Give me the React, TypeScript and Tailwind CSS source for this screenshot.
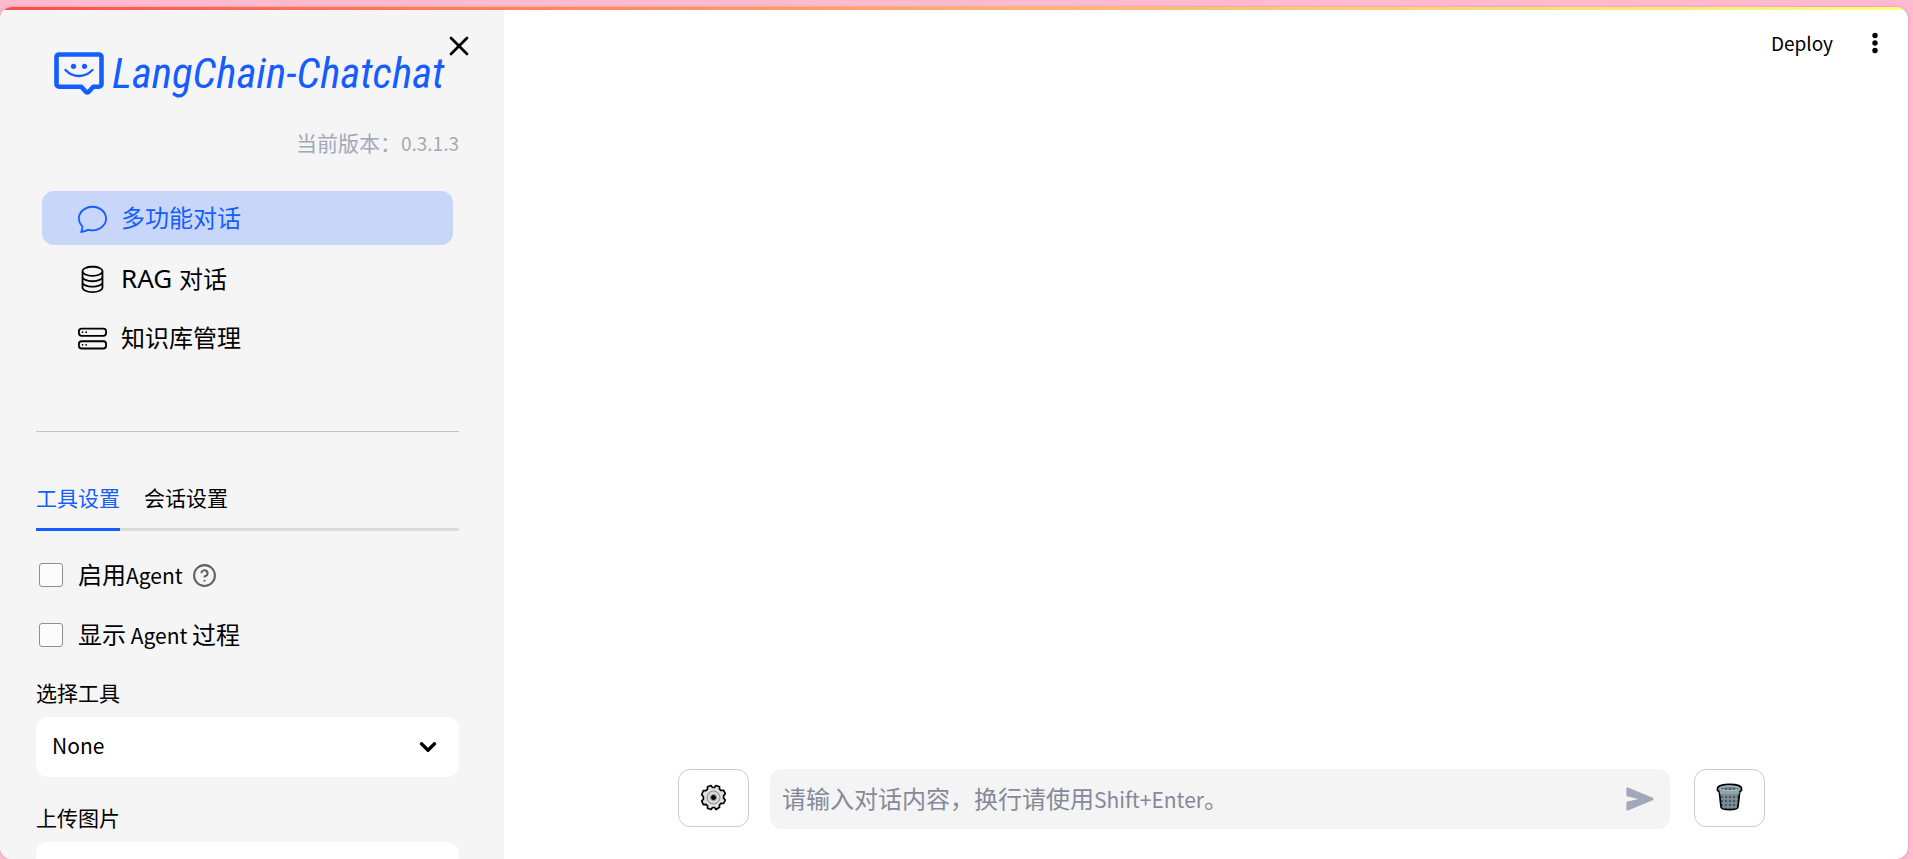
import { useState, type ReactNode } from "react";
import { BsChat, BsDatabase, BsHddStack } from "react-icons/bs";
import { ChevronDown, CircleHelp, X } from "lucide-react";

const NAV_ITEMS = [
  { id: "chat", label: "多功能对话", icon: BsChat },
  { id: "rag", prefix: "RAG ", label: "对话", icon: BsDatabase },
  { id: "kb", label: "知识库管理", icon: BsHddStack },
];

const TABS = ["工具设置", "会话设置"];

function Logo() {
  return (
    <div className="flex h-[43px] items-start gap-2 pl-[18px] text-[#165dff]">
      <svg width="50" height="43" viewBox="0 0 50 43" fill="none" stroke="currentColor" strokeLinecap="round" strokeLinejoin="round" className="shrink-0">
        <path d="M5 2.500h40a2.500 2.500 0 0 1 2.500 2.500v27.200a2.500 2.500 0 0 1-2.500 2.500h-5.500l-5 5.300q-1.200.8-2.400 0l-5-5.300H5a2.500 2.500 0 0 1-2.500-2.500V5A2.500 2.500 0 0 1 5 2.500z" strokeWidth="4.600" />
        <path d="M11.500 18c7.500 8 19 8 27 0" strokeWidth="2.400" />
        <circle cx="19.500" cy="14.300" r="2.600" fill="currentColor" stroke="none" />
        <circle cx="30.500" cy="14.300" r="2.600" fill="currentColor" stroke="none" />
      </svg>
      <span className="font-['Roboto_Condensed','Roboto',sans-serif] text-[43px] leading-[42px] whitespace-nowrap italic">
        LangChain-Chatchat
      </span>
    </div>
  );
}

function GearIcon() {
  return (
    <svg width="27" height="27" viewBox="0 0 27 27">
      <path
        d="M11 1.500l1.500 2h2l1.500-2 3.500 1.200v2.500l1.500 1.300 2.600-.2 1.700 3.400-1.700 2v2.500l1.700 1.800-1.700 3.500-2.600-.1-1.500 1.400v2.400L16 25.500l-1.500-2h-2l-1.500 2-3.500-1.200v-2.500L6 20.400l-2.600.2-1.700-3.500 1.700-1.900v-2.500L1.700 10.800l1.700-4.300 2.600.1 1.500-1.400V2.700z"
        fill="#e0e0e0"
        stroke="#000"
        strokeWidth="1.700"
        strokeLinejoin="round"
      />
      <circle cx="13.500" cy="13.500" r="6.500" fill="#d6d6d6" stroke="#8a8a8a" />
      <circle cx="13.500" cy="13.500" r="3" fill="#000" stroke="#aaa" />
    </svg>
  );
}

function TrashIcon() {
  return (
    <svg width="27" height="28" viewBox="0 0 27 28">
      <defs>
        <pattern id="mesh" width="4" height="4" patternUnits="userSpaceOnUse">
          <rect width="4" height="4" fill="#7d9098" />
          <path d="M2 .5L3.500 2 2 3.500 .5 2z" fill="#46535a" />
        </pattern>
      </defs>
      <path d="M3 6l2 18c.3 3.500 16.700 3.500 17 0l2-18z" fill="url(#mesh)" stroke="#000" strokeWidth="1.700" />
      <path d="M1.500 5.500c0-5.500 24-5.500 24 0v2c-2 2.500-22 2.500-24 0z" fill="#8fa3aa" stroke="#000" strokeWidth="1.700" />
      <path d="M3.700 8h19.600v3H4z" fill="#8fa3aa" />
      <ellipse cx="13.500" cy="5.300" rx="9.500" ry="2.300" fill="url(#mesh)" stroke="#b4c4ca" />
    </svg>
  );
}

function CheckRow({ id, children, help }: { id: string; children: ReactNode; help?: boolean }) {
  return (
    <div className="flex h-[60px] items-center pl-[3px]">
      <input
        id={id}
        type="checkbox"
        className="h-6 w-6 shrink-0 appearance-none rounded-[3px] border border-[#8f8f8f] bg-[#fcfcfc] checked:bg-[#165dff]"
      />
      <label htmlFor={id} className="pb-[2px] pl-[15px] text-[24px] leading-8">
        {children}
      </label>
      {help && (
        <button type="button" aria-label="帮助" className="ml-[9px] text-[#606060]">
          <CircleHelp size={25} strokeWidth={2} />
        </button>
      )}
    </div>
  );
}

function Sidebar() {
  const [page, setPage] = useState("chat");
  const [tab, setTab] = useState(TABS[0]);

  return (
    <aside className="relative w-[504px] shrink-0 overflow-y-auto bg-[#f5f5f5] pt-[42px] pr-[45px] pl-9 [scrollbar-width:none]">
      <button type="button" aria-label="关闭" className="absolute top-5 right-[29px]">
        <X size={32} strokeWidth={2} />
      </button>
      <Logo />
      <p className="mt-[31px] text-right text-[21px] leading-8 text-[#a3a8b8]">
        当前版本：<span className="text-[19px]">0.3.1.3</span>
      </p>

      <nav className="mx-[6px] mt-8 flex flex-col gap-[6px] font-['Noto_Sans','Noto_Sans_CJK_SC',sans-serif]">
        {NAV_ITEMS.map(({ id, prefix, label, icon: Icon }) => (
          <a
            key={id}
            href={`#${id}`}
            onClick={() => setPage(id)}
            className={`flex h-[54px] items-center gap-[14px] rounded-xl pl-9 text-[24px] leading-8 ${
              page === id ? "bg-[#c8d7f9] text-[#165dff]" : "text-black"
            }`}
          >
            <Icon size={29} />
            <span>
              {prefix && <span className="text-[26px]">{prefix}</span>}
              {label}
            </span>
          </a>
        ))}
      </nav>

      <hr className="mt-[66px] border-t border-[#c4c4c4]" />

      <div role="tablist" className="mt-[39px] flex h-[60px] gap-6 text-[21px] shadow-[inset_0_-3px_0_#dcdcdc]">
        {TABS.map((t) => (
          <button
            key={t}
            type="button"
            role="tab"
            aria-selected={tab === t}
            onClick={() => setTab(t)}
            className={`border-b-3 pb-1 ${tab === t ? "border-[#165dff] text-[#165dff]" : "border-transparent"}`}
          >
            {t}
          </button>
        ))}
      </div>

      <div className="mt-[14px]">
        <CheckRow id="agent" help>
          启用<span className="text-[21px]">Agent</span>
        </CheckRow>
        <CheckRow id="process">
          显示<span className="text-[21px]"> Agent </span>过程
        </CheckRow>
      </div>

      <label htmlFor="tool" className="mt-[11px] block text-[21px] leading-8">
        选择工具
      </label>
      <div className="mt-[9px] grid items-center">
        <select
          id="tool"
          className="col-start-1 row-start-1 h-[60px] w-full appearance-none rounded-xl bg-white pb-[2px] pl-4 text-[21px]"
        >
          <option>None</option>
        </select>
        <ChevronDown size={26} strokeWidth={3} className="pointer-events-none col-start-1 row-start-1 mr-[18px] justify-self-end" />
      </div>

      <label htmlFor="image" className="mt-6 block text-[21px] leading-8">
        上传图片
      </label>
      <div className="mt-[9px] rounded-xl bg-white p-6">
        <input id="image" type="file" accept="image/*" className="w-full text-[19px]" />
      </div>
    </aside>
  );
}

function ChatBar() {
  return (
    <form className="flex items-start pr-[143px] pb-[30px] pl-[174px]" onSubmit={(e) => e.preventDefault()}>
      <button
        type="button"
        aria-label="设置"
        className="flex h-[58px] w-[71px] shrink-0 items-center justify-center rounded-xl border border-[#cbcbcb] pb-[2px]"
      >
        <GearIcon />
      </button>
      <div className="mr-6 ml-[21px] grid h-[60px] flex-1 grid-cols-[1fr_auto] items-center rounded-xl bg-[#f4f4f4]">
        <input
          id="message"
          placeholder=" "
          className="peer col-start-1 row-start-1 h-full w-full bg-transparent px-3 text-[24px] outline-none"
        />
        <label
          htmlFor="message"
          className="pointer-events-none invisible col-start-1 row-start-1 px-3 pb-[2px] text-[24px] leading-8 whitespace-nowrap text-[#858999] peer-placeholder-shown:visible"
        >
          请输入对话内容，换行请使用<span className="text-[21px]">Shift+Enter</span>。
        </label>
        <button type="submit" aria-label="发送" className="px-4 text-[#a3a8b8]">
          <svg width="28" height="24" viewBox="0 0 28 24" fill="currentColor">
            <path d="M2 .6l24.700 10.200c1.100.5 1.100 1.900 0 2.400L2 23.400c-.9.400-1.600-.1-1.600-1v-6.700c0-.6.400-1.100 1-1.200L12.500 12 1.400 9.500c-.6-.1-1-.6-1-1.200V1.600c0-.9.700-1.400 1.600-1z" />
          </svg>
        </button>
      </div>
      <button
        type="button"
        aria-label="清空"
        className="flex h-[58px] w-[71px] shrink-0 items-center justify-center rounded-xl border border-[#cbcbcb] pb-[2px]"
      >
        <TrashIcon />
      </button>
    </form>
  );
}

export default function App() {
  return (
    <div className="h-screen bg-[#ffbad0] pt-[7px] pr-[5px] font-['Noto_Sans_CJK_SC',sans-serif] text-black">
      <div className="flex h-full flex-col overflow-hidden rounded-xl bg-white shadow-[0_0_3px_rgba(0,0,0,0.2)]">
        <div className="h-[3px] shrink-0 bg-linear-to-r from-[#ff4b4b] to-[#fffd80]" />
        <div className="flex min-h-0 flex-1">
          <Sidebar />
          <main className="flex min-w-0 flex-1 flex-col">
            <header className="flex h-[66px] items-center justify-end gap-[30px] pr-[21px]">
              <button type="button" className="text-[19px] leading-8">
                Deploy
              </button>
              <button type="button" aria-label="菜单">
                <svg width="24" height="24" viewBox="0 0 24 24">
                  <circle cx="12" cy="4.500" r="2.700" />
                  <circle cx="12" cy="12" r="2.700" />
                  <circle cx="12" cy="19.500" r="2.700" />
                </svg>
              </button>
            </header>
            <div className="flex-1" />
            <ChatBar />
          </main>
        </div>
      </div>
    </div>
  );
}
